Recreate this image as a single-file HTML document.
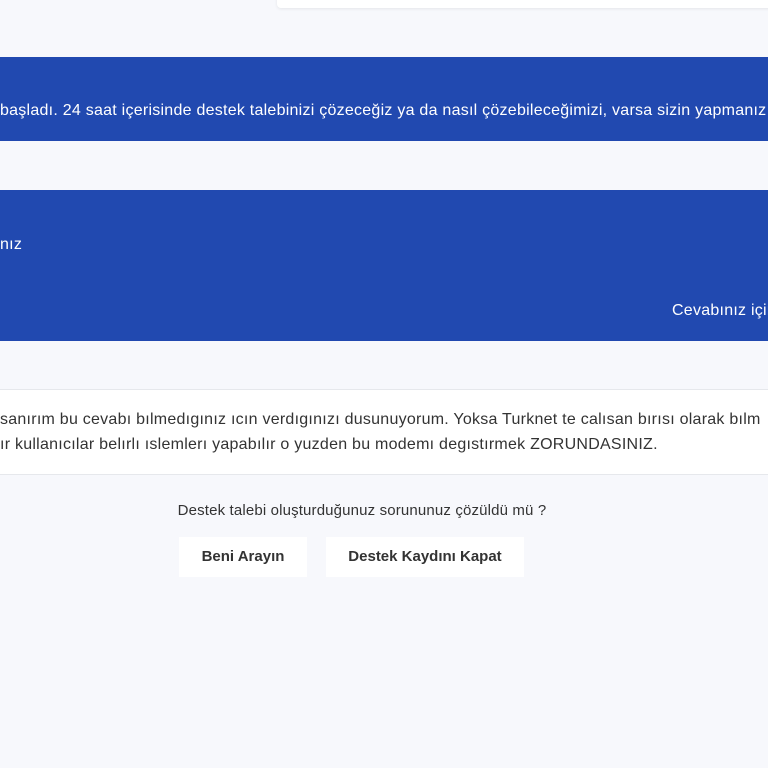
<!DOCTYPE html>
<html><head><meta charset="utf-8"><style>
body{margin:0;width:768px;height:768px;background:#f7f8fc;font-family:"Liberation Sans",sans-serif;position:relative;overflow:hidden}
.a{position:absolute;white-space:nowrap}
.blue{background:#2149b0;left:0;width:768px;color:#fff}
.btn{position:absolute;background:#fff;top:537px;height:40px;line-height:40px;text-align:center;font-size:15px;color:#333;font-weight:bold;letter-spacing:0}
.t{font-size:16px;letter-spacing:0.25px}
</style></head><body>
<div class="a" style="left:277px;top:-10px;width:500px;height:18px;background:#fff;border-radius:4px;box-shadow:0 1px 3px rgba(0,0,0,.08)"></div>
<div class="a blue" style="top:57px;height:84px"></div>
<div class="a t" style="left:0;top:102px;color:#fff">başladı. 24 saat içerisinde destek talebinizi çözeceğiz ya da nasıl çözebileceğimizi, varsa sizin yapmanız</div>
<div class="a blue" style="top:190px;height:151px"></div>
<div class="a t" style="left:0;top:236px;color:#fff">nız</div>
<div class="a t" style="left:672px;top:302px;color:#fff">Cevabınız için</div>
<div class="a" style="left:0;top:389px;width:768px;height:84px;background:#fff;border-top:1px solid #e6e8ec;border-bottom:1px solid #e6e8ec"></div>
<div class="a t" style="left:0;top:411px;color:#333">sanırım bu cevabı bılmedıgınız ıcın verdıgınızı dusunuyorum. Yoksa Turknet te calısan bırısı olarak bılm</div>
<div class="a t" style="left:0;top:436px;color:#333">ır kullanıcılar belırlı ıslemlerı yapabılır o yuzden bu modemı degıstırmek ZORUNDASINIZ.</div>
<div class="a" style="left:0;width:724px;text-align:center;top:502px;color:#333;font-size:15px;letter-spacing:0.15px">Destek talebi oluşturduğunuz sorununuz çözüldü mü ?</div>
<div class="btn" style="left:179px;width:128px">Beni Arayın</div>
<div class="btn" style="left:326px;width:198px">Destek Kaydını Kapat</div>
</body></html>
